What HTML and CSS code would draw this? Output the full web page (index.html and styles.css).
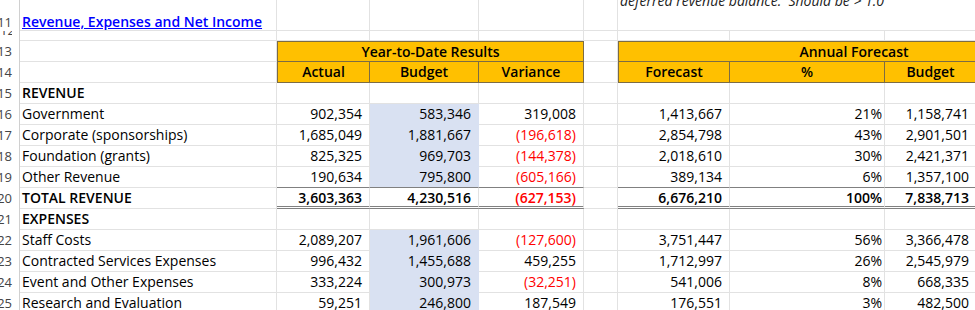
FILE: index.html
```html
<!DOCTYPE html>
<html lang="en">
<head>
    <meta charset="UTF-8">
    <title>Revenue, Expenses and Net Income</title>
    <link rel="stylesheet" href="styles.css">
</head>
<body>
    <div class="sheet">
        <!-- fila 10: nota que sobresale por arriba -->
        <div class="row top">
            <div class="c rh"></div>
            <div class="c"></div>
            <div class="c"></div>
            <div class="c"></div>
            <div class="c"></div>
            <div class="c"></div>
            <div class="c note"><div class="note-text">deferred revenue balance.&nbsp;&nbsp;Should be &gt; 1.0</div></div>
        </div>

        <div class="row">
            <div class="c rh r11">11</div>
            <div class="c title"><a href="#" class="link">Revenue, Expenses and Net Income</a></div>
            <div class="c"></div>
            <div class="c"></div>
            <div class="c"></div>
            <div class="c"></div>
        </div>

        <div class="row">
            <div class="c rh short"><span class="cut"><span>12</span></span></div>
            <div class="c"></div>
            <div class="c"></div>
            <div class="c"></div>
            <div class="c"></div>
            <div class="c"></div>
            <div class="c"></div>
            <div class="c"></div>
            <div class="c"></div>
            <div class="c"></div>
        </div>

        <div class="row">
            <div class="c rh">13</div>
            <div class="c"></div>
            <div class="c hd group span3">Year-to-Date Results</div>
            <div class="c"></div>
            <div class="c hd group span4">Annual Forecast</div>
        </div>

        <div class="row">
            <div class="c rh">14</div>
            <div class="c"></div>
            <div class="c hd sub first">Actual</div>
            <div class="c hd sub">Budget</div>
            <div class="c hd sub">Variance</div>
            <div class="c"></div>
            <div class="c hd sub first">Forecast</div>
            <div class="c hd sub">%</div>
            <div class="c hd sub">Budget</div>
            <div class="c hd sub"></div>
        </div>

        <div class="row">
            <div class="c rh">15</div>
            <div class="c lbl b">REVENUE</div>
            <div class="c"></div>
            <div class="c"></div>
            <div class="c"></div>
            <div class="c"></div>
            <div class="c"></div>
            <div class="c"></div>
            <div class="c"></div>
            <div class="c"></div>
        </div>

        <div class="row">
            <div class="c rh">16</div>
            <div class="c lbl">Government</div>
            <div class="c num">902,354</div>
            <div class="c num bl">583,346</div>
            <div class="c num">319,008</div>
            <div class="c"></div>
            <div class="c num">1,413,667</div>
            <div class="c num pct">21%</div>
            <div class="c num">1,158,741</div>
            <div class="c"></div>
        </div>

        <div class="row">
            <div class="c rh">17</div>
            <div class="c lbl">Corporate (sponsorships)</div>
            <div class="c num">1,685,049</div>
            <div class="c num bl">1,881,667</div>
            <div class="c num neg">(196,618)</div>
            <div class="c"></div>
            <div class="c num">2,854,798</div>
            <div class="c num pct">43%</div>
            <div class="c num">2,901,501</div>
            <div class="c"></div>
        </div>

        <div class="row">
            <div class="c rh">18</div>
            <div class="c lbl">Foundation (grants)</div>
            <div class="c num">825,325</div>
            <div class="c num bl">969,703</div>
            <div class="c num neg">(144,378)</div>
            <div class="c"></div>
            <div class="c num">2,018,610</div>
            <div class="c num pct">30%</div>
            <div class="c num">2,421,371</div>
            <div class="c"></div>
        </div>

        <div class="row">
            <div class="c rh">19</div>
            <div class="c lbl">Other Revenue</div>
            <div class="c num">190,634</div>
            <div class="c num bl">795,800</div>
            <div class="c num neg">(605,166)</div>
            <div class="c"></div>
            <div class="c num">389,134</div>
            <div class="c num pct">6%</div>
            <div class="c num">1,357,100</div>
            <div class="c"></div>
        </div>

        <div class="row">
            <div class="c rh">20</div>
            <div class="c lbl b">TOTAL REVENUE</div>
            <div class="c num b tot">3,603,363</div>
            <div class="c num b tot">4,230,516</div>
            <div class="c num b tot neg">(627,153)</div>
            <div class="c"></div>
            <div class="c num b tot">6,676,210</div>
            <div class="c num b tot pct">100%</div>
            <div class="c num b tot">7,838,713</div>
            <div class="c tot"></div>
        </div>

        <div class="row">
            <div class="c rh">21</div>
            <div class="c lbl b">EXPENSES</div>
            <div class="c"></div>
            <div class="c"></div>
            <div class="c"></div>
            <div class="c"></div>
            <div class="c"></div>
            <div class="c"></div>
            <div class="c"></div>
            <div class="c"></div>
        </div>

        <div class="row">
            <div class="c rh">22</div>
            <div class="c lbl">Staff Costs</div>
            <div class="c num">2,089,207</div>
            <div class="c num bl">1,961,606</div>
            <div class="c num neg">(127,600)</div>
            <div class="c"></div>
            <div class="c num">3,751,447</div>
            <div class="c num pct">56%</div>
            <div class="c num">3,366,478</div>
            <div class="c"></div>
        </div>

        <div class="row">
            <div class="c rh">23</div>
            <div class="c lbl">Contracted Services Expenses</div>
            <div class="c num">996,432</div>
            <div class="c num bl">1,455,688</div>
            <div class="c num">459,255</div>
            <div class="c"></div>
            <div class="c num">1,712,997</div>
            <div class="c num pct">26%</div>
            <div class="c num">2,545,979</div>
            <div class="c"></div>
        </div>

        <div class="row">
            <div class="c rh">24</div>
            <div class="c lbl">Event and Other Expenses</div>
            <div class="c num">333,224</div>
            <div class="c num bl">300,973</div>
            <div class="c num neg">(32,251)</div>
            <div class="c"></div>
            <div class="c num">541,006</div>
            <div class="c num pct">8%</div>
            <div class="c num">668,335</div>
            <div class="c"></div>
        </div>

        <div class="row">
            <div class="c rh">25</div>
            <div class="c lbl">Research and Evaluation</div>
            <div class="c num">59,251</div>
            <div class="c num bl">246,800</div>
            <div class="c num">187,549</div>
            <div class="c"></div>
            <div class="c num">176,551</div>
            <div class="c num pct">3%</div>
            <div class="c num">482,500</div>
            <div class="c"></div>
        </div>
    </div>
</body>
</html>
```

FILE: styles.css
```css
body {
    margin: 0;
    overflow: hidden;
    background-color: #fff;
    color: #000;
    font-family: "Open Sans", Lato, sans-serif;
    font-size: 14px;
}

.sheet {
    display: grid;
    grid-template-columns: 20px 257px 93px 109px 105px 34px 112px 155px 92px 113px;
    grid-template-rows: 8px 23px 10px repeat(13, 21px);
    width: 1090px;
}

.row {
    display: contents;
}

.c {
    box-sizing: border-box;
    border-right: 1px solid #e2e2e2;
    border-bottom: 1px solid #e2e2e2;
    padding: 0 2px;
    line-height: 20px;
    white-space: nowrap;
    overflow: hidden;
}

.top .c {
    border-bottom: none;
}

/* cabecera de filas */
.rh {
    display: flex;
    justify-content: flex-end;
    padding: 0 7px 0 0;
    border-bottom: none;
    border-right-color: #d0d0d0;
    color: #444;
    font-size: 13px;
}

.rh.r11 {
    line-height: 16px;
    padding-top: 6px;
}

.rh.short {
    align-items: flex-start;
}

.cut {
    display: block;
    height: 4px;
    overflow: hidden;
    line-height: 14px;
}

.cut span {
    display: block;
    margin-top: -8px;
}

.note {
    grid-column: span 4;
    grid-row: span 2;
    border-right: none;
    border-bottom: 1px solid #e2e2e2 !important;
}

.note-text {
    margin-top: -6px;
    line-height: 14px;
    font-style: italic;
    color: #222;
}

.title {
    line-height: 16px;
    padding-top: 6px;
}

.link {
    color: #0000ff;
    font-weight: 600;
    text-decoration: underline;
}

.lbl {
    text-align: left;
}

.b {
    font-weight: 600;
}

.num {
    text-align: right;
    padding-right: 7px;
}

.num.pct {
    padding-right: 2px;
}

.neg {
    color: #ff0000;
}

.bl {
    background-color: #d9e1f2;
    border-color: #d9e1f2;
}

/* encabezados naranjas */
.hd {
    background-color: #ffc000;
    border-color: #7c6c44;
    font-weight: 600;
    text-align: center;
}

.hd.group {
    border-top: 1px solid #7c6c44;
    border-left: 1px solid #7c6c44;
    line-height: 19px;
}

.span3 {
    grid-column: span 3;
}

.span4 {
    grid-column: span 4;
}

.hd.sub.first {
    border-left: 1px solid #7c6c44;
}

/* fila de totales */
.tot {
    margin-top: -1px;
    border-top: 1px solid #808080;
    border-bottom: 3px double #808080;
}
```
